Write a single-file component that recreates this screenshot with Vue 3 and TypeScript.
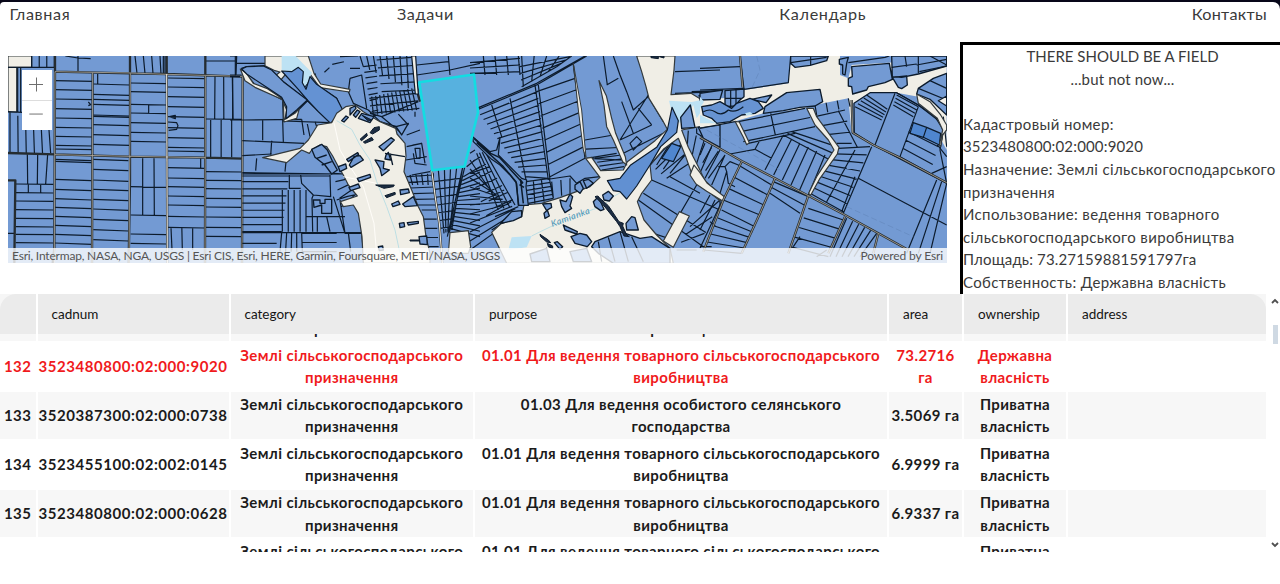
<script setup lang="ts">
type Hatch = [number, number, number, number, number, number, number, number, number]

interface Row {
  id: string
  cadnum: string
  category: string[]
  purpose: string[]
  area: string[]
  ownership: string[]
  selected?: boolean
}

const nav = [
  { label: 'Главная', cls: 'home' },
  { label: 'Задачи', cls: 'tasks' },
  { label: 'Календарь', cls: 'cal' },
  { label: 'Контакты', cls: 'contacts' },
]

const category = ['Землі сільськогосподарського', 'призначення']
const goods = ['01.01 Для ведення товарного сільськогосподарського', 'виробництва']
const priv = ['Приватна', 'власність']

const headers = ['', 'cadnum', 'category', 'purpose', 'area', 'ownership', 'address']
const rows: Row[] = [
  { id: '', cadnum: '', category, purpose: goods, area: [], ownership: [] },
  { id: '132', cadnum: '3523480800:02:000:9020', category, purpose: goods, area: ['73.2716', 'га'], ownership: ['Державна', 'власність'], selected: true },
  { id: '133', cadnum: '3520387300:02:000:0738', category, purpose: ['01.03 Для ведення особистого селянського', 'господарства'], area: ['3.5069 га'], ownership: priv },
  { id: '134', cadnum: '3523455100:02:002:0145', category, purpose: goods, area: ['6.9999 га'], ownership: priv },
  { id: '135', cadnum: '3523480800:02:000:0628', category, purpose: goods, area: ['6.9337 га'], ownership: priv },
  { id: '', cadnum: '', category, purpose: goods, area: [], ownership: priv },
]

const details = [
  'Кадастровый номер:',
  '3523480800:02:000:9020',
  'Назначение: Землі сільськогосподарського',
  'призначення',
  'Использование: ведення товарного',
  'сільськогосподарського виробництва',
  'Площадь: 73.27159881591797га',
  'Собственность: Державна власність',
]

// n boundary lines between edge p1-p2 and edge p3-p4
function hatch(list: Hatch[]): string {
  return list
    .map(([x1, y1, x2, y2, x3, y3, x4, y4, n]) => {
      let d = ''
      for (let i = 0; i < n; i++) {
        const t = n === 1 ? 0.5 : i / (n - 1)
        d += `M${(x1 + (x2 - x1) * t).toFixed(1)} ${(y1 + (y2 - y1) * t).toFixed(1)}L${(x3 + (x4 - x3) * t).toFixed(1)} ${(y3 + (y4 - y3) * t).toFixed(1)}`
      }
      return d
    })
    .join('')
}

// horizontal boundaries of a column
function rungs(x1: number, x2: number, slope: number, ys: number[]): string {
  return ys.map((y) => `M${x1} ${y}L${x2} ${y + slope}`).join('')
}

const westLines =
  rungs(165, 278, 2, [242, 269, 297, 326, 354, 382, 409, 436, 447]) +
  rungs(165, 275, 4, [478, 484, 538, 568, 596, 622, 649, 676, 703, 729]) +
  rungs(280, 388, 3, [252, 283, 298, 313, 345, 349, 374, 404, 433]) +
  rungs(280, 385, 4, [478, 508, 540, 568, 598, 627, 658, 689, 719]) +
  rungs(392, 498, 2, [249, 275, 313, 339, 368, 397, 424, 560, 645, 702, 730]) +
  rungs(504, 614, 2, [234, 261, 290, 320, 350, 383, 413, 442, 453, 503, 534, 560, 588, 615, 649, 682]) +
  rungs(618, 726, 1, [357, 515, 541, 566, 595, 621, 651, 682, 709]) +
  rungs(47, 160, 1, [552, 578, 603, 629, 655, 680, 703, 728]) +
  hatch([
    [95, 168, 163, 168, 95, 202, 163, 202, 4],
    [405, 168, 480, 168, 411, 220, 483, 222, 4],
    [30, 337, 147, 390, 30, 458, 152, 460, 6],
    [645, 228, 697, 230, 644, 357, 699, 357, 3],
    [632, 360, 695, 360, 632, 472, 695, 472, 3],
    [428, 475, 462, 475, 428, 645, 463, 645, 2],
    [513, 683, 578, 683, 516, 750, 578, 750, 3],
    [82, 463, 113, 463, 83, 552, 112, 552, 2],
  ]) +
  'M24 202H165M53 202V337M62 202V337M24 335L66 337M234 168V214M196 168L234 174L272 176M293 222V252M446 313V340M490 168V222M495 168V222M616 183H706M706 168V228M143 463L137 552M85 552V578M122 555V578M602 475V503M24 700H42M504 366L530 368L534 377L530 388L506 391M265 306L272 314L265 317M508 350L526 346V356Z'

const villageWestLines = hatch([
  [37, 210, 37, 272, 215, 208, 222, 280, 2],
  [98, 210, 158, 210, 98, 271, 160, 275, 2],
  [37, 317, 37, 368, 125, 312, 330, 372, 2],
  [37, 395, 37, 545, 175, 395, 155, 545, 8],
  [157, 420, 228, 420, 157, 545, 228, 545, 5],
  [37, 548, 37, 580, 395, 548, 140, 580, 2],
  [155, 548, 215, 548, 150, 605, 217, 605, 5],
  [37, 372, 37, 378, 300, 372, 300, 378, 2],
  [215, 550, 215, 605, 320, 550, 320, 605, 3],
  [310, 370, 335, 470, 345, 372, 380, 430, 5],
]) + 'M125 272L122 318M80 325L77 362M168 335L165 365M178 375V415H212M212 375L215 400L250 435L302 440L300 375M228 545V500H345M248 545L246 445L250 435M262 500V545M310 440L345 550L395 550L400 605M320 450L350 440L385 432M355 548L362 605M215 208L222 255M232 222L240 260M255 215L260 230M0 18L20 18L18 75L0 75M20 75L35 75M18 40H105M0 80H30M8 80V210M0 210H37M35 55L50 50L105 47L160 95L230 150L300 218L160 213L158 150L75 105Z M165 210L205 180L235 150M205 60L225 110L245 85L260 105L320 145L335 180L300 215M330 450L345 550M290 500L300 545'

const northLines = hatch([
  [400, 50, 425, 185, 440, 45, 445, 180, 9],
  [440, 30, 455, 125, 545, 22, 565, 120, 5],
  [390, 18, 530, 18, 400, 50, 535, 115, 8],
  [425, 140, 545, 115, 430, 195, 560, 180, 11],
  [418, 145, 422, 190, 560, 130, 568, 175, 3],
  [255, 70, 385, 18, 260, 90, 330, 20, 4],
  [455, 200, 555, 185, 515, 250, 555, 200, 3],
  [530, 380, 560, 465, 610, 375, 616, 465, 6],
  [540, 375, 610, 370, 548, 405, 610, 405, 5],
  [575, 480, 590, 590, 618, 480, 626, 590, 5],
  [625, 360, 698, 352, 642, 550, 665, 540, 5],
  [612, 395, 630, 535, 690, 385, 665, 530, 7],
  [700, 380, 660, 535, 750, 350, 750, 560, 14],
  [710, 350, 690, 545, 735, 330, 715, 590, 2],
]) + 'M698 352L652 560M704 352L658 548M655 18L660 75M560 75L660 60L750 40M560 45L655 35M420 190L455 200L565 155M415 180L450 215L500 230M360 85L395 75L410 175M360 85L355 125L370 160L415 180M270 105L355 125M360 55L390 55M530 255L570 240M530 290L575 280M527 330L590 320M545 375L600 365M548 285L575 280L585 340M550 310L555 340L590 345M555 295H570V325H560Z'

const centreLines = hatch([
  [0, 38, 0, 70, 150, 25, 150, 65, 3],
  [40, 18, 145, 18, 45, 75, 150, 75, 4],
  [150, 50, 155, 110, 300, 20, 260, 50, 4],
  [155, 18, 305, 18, 160, 110, 260, 50, 5],
  [20, 180, 165, 380, 200, 105, 235, 385, 15],
  [65, 165, 65, 165, 95, 260, 95, 260, 1],
  [120, 145, 120, 145, 170, 400, 170, 400, 1],
  [200, 125, 240, 380, 315, 85, 345, 325, 8],
  [168, 395, 175, 460, 240, 385, 250, 445, 6],
  [190, 390, 238, 385, 195, 465, 250, 445, 3],
  [0, 310, 75, 500, 15, 300, 145, 470, 9],
  [20, 310, 45, 305, 85, 480, 135, 465, 4],
  [0, 330, 0, 600, 60, 420, 155, 490, 11],
  [0, 370, 65, 540, 60, 350, 145, 490, 5],
  [345, 270, 350, 325, 430, 255, 460, 330, 3],
  [375, 325, 395, 360, 455, 315, 462, 350, 4],
  [245, 395, 300, 385, 250, 445, 300, 430, 3],
  [410, 105, 450, 270, 445, 85, 535, 135, 2],
  [450, 270, 460, 310, 545, 225, 580, 250, 2],
  [455, 155, 505, 175, 490, 250, 545, 225, 2],
  [560, 345, 600, 370, 600, 280, 645, 315, 3],
  [540, 345, 590, 385, 625, 250, 665, 335, 4],
  [655, 242, 750, 300, 650, 310, 705, 385, 5],
  [545, 390, 505, 450, 750, 480, 700, 590, 2],
  [600, 380, 550, 550, 690, 430, 610, 570, 2],
  [525, 420, 515, 440, 715, 535, 700, 560, 1],
  [750, 440, 690, 590, 750, 470, 725, 590, 3],
  [620, 600, 660, 530, 680, 600, 750, 450, 4],
  [615, 65, 615, 130, 750, 60, 750, 125, 2],
  [665, 125, 705, 150, 750, 122, 750, 148, 3],
]) + 'M0 190L20 180L200 105L350 18M20 175L200 100L345 18M195 105L235 390M205 105L240 388M310 45L345 325M400 18L412 105M430 18L450 75L470 125L490 180L535 140M350 325L440 310M580 215L535 140M240 387L300 378L320 400L345 385L390 380M480 280L500 260L515 275L490 300ZM545 390L750 480M680 405L590 560M680 235V250L750 290'

const eastLines = hatch([
  [0, 55, 0, 120, 120, 50, 130, 115, 2],
  [115, 215, 130, 275, 315, 175, 345, 230, 3],
  [212, 190, 212, 190, 226, 255, 226, 255, 1],
  [345, 165, 445, 145, 350, 195, 450, 170, 4],
  [345, 200, 410, 280, 435, 180, 455, 280, 4],
  [405, 185, 425, 180, 465, 300, 480, 285, 1],
  [250, 255, 375, 315, 195, 360, 325, 435, 6],
  [250, 255, 275, 245, 390, 330, 410, 290, 3],
  [415, 295, 330, 430, 510, 290, 430, 485, 9],
  [465, 300, 465, 300, 380, 455, 380, 455, 1],
  [500, 135, 465, 170, 562, 178, 545, 210, 5],
  [590, 135, 580, 165, 655, 170, 640, 200, 4],
  [585, 130, 655, 170, 525, 285, 600, 320, 2],
  [625, 245, 600, 320, 715, 290, 690, 370, 4],
  [730, 200, 695, 370, 740, 290, 740, 350, 3],
  [475, 385, 475, 385, 740, 525, 740, 525, 1],
  [515, 290, 515, 290, 430, 490, 430, 490, 1],
  [710, 390, 740, 400, 620, 610, 690, 610, 3],
  [115, 345, 70, 450, 215, 405, 180, 495, 4],
  [65, 480, 10, 600, 165, 530, 125, 610, 6],
  [220, 395, 210, 430, 325, 440, 300, 490, 3],
  [325, 475, 270, 590, 430, 510, 385, 620, 5],
  [440, 505, 530, 550, 390, 620, 480, 620, 6],
  [280, 590, 350, 620, 300, 560, 380, 600, 2],
  [15, 280, 75, 315, 0, 315, 25, 385, 4],
]) + 'M0 235L105 215M0 265L90 312L165 298L180 270M165 298L215 325M145 280L285 250M75 315L35 405M55 350L75 350L90 335L115 345M75 350L80 365L60 430M80 365L85 400L105 410M380 345L440 355M425 485L465 380M65 455L0 595M45 450L0 540M30 435L0 490'

const eastRoads = [
  'M0 262L125 333L225 385L325 437L435 495L535 550L625 600',
  'M120 18L128 112',
  'M125 335L70 450L10 605',
  'M225 385L180 490L125 610',
  'M325 437L300 510L265 610',
  'M435 500L385 610',
  'M535 550L520 610',
  'M455 150L458 248L520 285L600 323L740 398',
]
</script>

<template>
  <div class="page">
    <div class="frame">
      <nav class="nav">
        <a v-for="n in nav" :key="n.label" :class="n.cls">{{ n.label }}</a>
      </nav>
    </div>

    <main class="upper">
      <section class="map">
        <svg class="canvas" viewBox="8 56 939 207" width="939" height="207">
          <rect x="8" y="56" width="939" height="207" fill="#739ad3" />

          <g transform="scale(.33333)" class="ln">
            <path class="land" d="M24 168H95V202H24ZM24 202H50V336H24Z" />
            <path :d="westLines" />
            <path class="casing" d="M165 168V215L390 220L500 222L728 230M24 459L165 463L390 470L616 473L728 476M165 215L163 744L158 790M278 218L276 790M390 168V540L386 790M500 168L502 790M616 168L615 790M728 230L726 790M24 541H46L43 790" />
            <path class="road" d="M165 215L390 219L500 223L728 229M165 464L390 469L616 473M165 215L163 790M278 218L276 790M391 220L387 790M616 228L615 790M728 230L726 790" />
            <path class="road bright" d="M500 222L502 790" />
          </g>

          <g transform="translate(230 50) scale(.33333)" class="ln">
            <path :d="villageWestLines" />
            <path :d="northLines" />
            <path class="land" d="M105 18H235L252 70L272 102L360 118L358 126L270 113L240 72L232 98L215 110L205 60L165 75L140 105L135 78L150 66L135 62L105 47Z" />
            <path class="water" d="M155 18H197L220 42L246 68L232 100L222 112L205 60L180 70L155 60Z" />
            <path d="M155 63L185 65L205 52L220 65L217 98L228 118L240 80L260 103L320 145L337 178L302 220L265 185L232 150L205 118Z" fill="#6492d3" />
            <path class="land" d="M31 57L48 68L70 100L110 115L155 145L170 180L165 208L195 190L208 176L200 205L162 216L160 150L75 112L45 92Z" />
            <path d="M50 72L110 112L155 142L170 170L168 206L200 180L232 150L160 95L125 60L100 48L50 50L35 57Z" fill="#739ad3" />
            <path class="land" d="M347 170L375 165L400 185L450 215L497 235L501 252L525 280L528 318L522 365L545 420L565 470L580 500L588 560L600 610V640H400L396 560L385 490L370 465L340 470L331 455L382 438L355 405L340 375L325 350L308 318L290 290L270 285L245 300L238 310L215 300L170 338L98 323L210 295L235 270L263 225L305 218L320 190Z" />
            <path d="M312 218L330 300L360 350L400 410L432 520L440 610M340 380L440 400" stroke="#fffdf9" stroke-width="3" />
            <path class="stream" d="M320 212L365 238L390 285L420 330L440 395L470 470L495 540L510 610" />
            <path class="lot" d="M335 212L348 198L355 202L342 216ZM360 175L375 168L378 175L360 195ZM370 195L382 180L390 185L377 202ZM385 205L395 190L432 200L420 218ZM447 290L483 263L493 270L460 302ZM468 315L475 307L482 330L465 327ZM435 330L462 335L460 355L478 360L455 377L450 355ZM350 328L383 308L386 313L355 335ZM358 345L372 320L390 317L400 330L363 352ZM325 350L347 342L350 355L330 365ZM382 385L420 373L422 382L387 395ZM357 412L385 402L390 413L362 422ZM485 462L505 453L510 463L489 470ZM510 420L535 417L538 428L512 434ZM518 462L550 440L562 467L525 470ZM508 520L522 518L524 530L510 533ZM532 518L565 514V520L535 525ZM567 560L590 558L592 584L570 582ZM445 590L458 588L460 600L448 602ZM498 230L535 220L515 255Z" />
            <path class="lot" d="M245 298L275 283L292 300L308 335L322 360L305 372L285 345L255 322ZM260 325L290 315M275 345L305 335M465 310L525 320M480 310L488 345M250 450H270V460H285V448H305V490H275V465L252 472Z" />
            <path class="dark" d="M390 268L410 250L412 257L395 272ZM420 248L432 233L448 230V240L428 252ZM400 276L425 262L430 270L405 280ZM437 405L493 405L490 410L462 415ZM465 437L495 427L496 433L470 443ZM540 570H568V573H540ZM395 195L425 210L415 213Z" />
            <path class="land" d="M660 548L715 542L722 590L715 610H655Z" />
            <path class="casing" d="M552 18L563 130L570 155M605 360L617 450L628 520L637 640" />
            <path d="M545 18H557L562 95L565 132H556Z" fill="#f1eee6" />
            <path class="road bright" d="M605 360L617 450L628 520L637 640" />
          </g>

          <g transform="translate(470 50) scale(.33333)" class="ln">
            <path :d="centreLines" />
            <path class="land" d="M65 547L92 522L155 500L162 465L215 460L270 443L305 430L360 410L390 382L347 325L365 322L392 362L460 360L472 335L555 272L592 238L580 215L537 145L528 110L515 65L500 18H615L612 60L603 134L663 130L700 152L750 158V212L690 230L635 240L655 292L685 350L705 392L750 433V452L702 414L672 390L648 322L625 265L580 298L540 345L545 390L515 430L502 455L522 510L560 555L600 595L610 640H110Z" />
            <path class="land" d="M387 92L409 137L425 205L437 250L466 320L470 345L458 335L430 270L410 230L402 165Z" />
            <path class="land thin" d="M310 40L335 180L348 322L340 300L325 180Z" />
            <path class="water" d="M597 152L665 156L693 150L700 175L680 205L670 165L630 220L605 185Z" />
            <path class="water" d="M125 562L185 558L170 592L115 600Z" />
            <path class="stream" d="M185 558C260 520 330 490 395 470L430 440L500 400" />
            <path d="M606 172L625 212L620 247L572 290L540 345L500 408L470 447L450 425L430 422L412 392L450 385L482 345L560 292L592 240Z" fill="#6190d2" />
            <path class="lot" d="M632 202L661 165L675 232L635 235ZM695 172L725 165L750 175V218L705 195ZM685 232L750 225V292L700 265ZM398 435L415 424L430 438L418 453L402 450ZM370 455L385 440L402 478L392 482L375 470ZM218 462L243 460L245 472L232 480L238 498L225 505L222 490L230 482ZM270 450L288 455L300 432L308 440L300 468L305 475L285 488L275 470ZM280 525L290 530L322 545L320 552L285 540ZM303 560L330 550L350 555L365 575L352 590L315 580ZM365 590L375 575L450 545L510 565L545 560L600 595V640H430L385 610ZM468 520L485 500L495 503L505 540L470 540ZM92 520L125 485L155 482L155 500L130 512ZM253 578L262 575L278 590L270 598ZM180 612L230 595L240 635H185ZM300 605L350 595L365 635H310ZM315 405L330 395L340 415L330 430L315 418ZM340 392L355 388L370 400L350 415Z" />
            <path class="parcel" d="M575 325L605 280L632 290L610 335Z" />
            <path d="M385 575L395 635M415 562L435 635M450 545L475 635M485 560L520 635" />
            <path class="dark" d="M375 440L382 438L415 467L447 515L460 520L458 528L470 555L478 560L462 558L450 530L440 515L400 465ZM210 553L235 570L242 578L230 576L212 560ZM232 580L248 588V596L235 590ZM543 18H565V26L543 23ZM568 20L582 18V24Z" />
            <path d="M8 260L60 305L80 300L90 262L85 315L155 385L170 390L168 410L175 466H145L140 400L120 375L90 345L65 328L10 275Z" fill="#6b93cb" />
            <path d="M12 265L62 310L88 322L152 392L160 460M20 278L65 318L100 350L138 395L146 465M150 388L158 398L150 405L162 412" stroke-width="4.5" />
            <path class="land" d="M580 573L628 485L658 498L610 592Z" />
            <text class="river" x="247" y="531" transform="rotate(-20 247 531)">Kamianka</text>
          </g>

          <g transform="translate(700 50) scale(.33333)" class="ln">
            <path class="land clean" d="M0 145L70 145L132 120L265 100L270 45L330 48L385 18H420V75L445 85L455 45L565 38L740 18V300L655 140L590 128L490 140L460 160L455 250L445 145L370 160L345 165L300 178L190 190L105 214L60 225L0 232Z" />
            <path d="M510 128L590 128L655 165L705 200L730 240L720 300L740 400L520 285L463 248L462 160Z" fill="#739ad3" />
            <path :d="eastLines" />
            <path d="M120 18L132 118L265 98L272 18M590 128L655 165L720 215L730 245L720 290" />
            <path class="lot" d="M190 190L195 170L260 128L360 118L368 155L345 168L300 172L250 182ZM75 122L132 117V140L120 150L105 168L75 170ZM155 148L215 135L198 158L185 155ZM418 28L445 22L440 40L435 75L428 72V45L418 42ZM455 50L568 40L577 88L555 98L505 110L500 120L458 132L455 110L445 108V85L457 80ZM575 18H740V48L655 72L605 82L577 80ZM577 82L620 78L622 105L605 116L595 112ZM740 70L700 85L655 115L650 132L690 148L740 195ZM272 18H385L380 32L330 46L285 52L272 40ZM0 130L68 120L60 148L0 150Z" />
            <path d="M92 120V168M108 120V165M75 145H125M332 20V45M272 38L380 22M655 115L740 150M690 92L740 115M575 52L650 42M655 18V70M615 18L620 50M650 45L740 28M690 18L740 45M658 65L740 48M445 38L555 22L568 18" />
            <path d="M715 152L740 138V168Z" fill="#f3f0e9" />
            <path class="deep" d="M5 170L35 165L60 155L95 175L110 160L150 145L175 155L190 175L165 190L125 195L90 215L50 220L35 205L10 195Z" />
            <path class="parcel" d="M640 218L680 232L670 262L630 250ZM680 232L722 250L718 285L670 262Z" />
            <path d="M10 185Q30 175 45 185Q65 200 85 180Q105 190 130 170" />
            <path class="water" d="M0 140L12 155L0 175ZM0 195L50 220H0ZM135 190L150 186L160 193L140 197Z" />
            <path class="land" d="M320 175L340 175L350 200L395 262L417 292L412 312L360 385L332 436L326 430L350 380L402 300L385 270L345 225Z" />
            <path class="land" d="M105 214L118 216L148 278L140 284L130 262ZM650 132L690 155L722 195L740 225V240L728 255L722 290L718 285L728 240L712 205L655 160Z" />
            <path class="land" d="M-18 345L0 368L22 400L75 442L68 453L20 424L-12 402L-30 375Z" />
            <path v-for="r in eastRoads" :key="r" class="casing" :d="r" />
            <path v-for="r in eastRoads" :key="'c' + r" class="road" :d="r" />
            <path d="M20 240L150 310M160 315L240 360M440 470L640 560M170 18L180 60L155 115" stroke="#6488bc" stroke-width="2" stroke-dasharray="18 9" />
          </g>

          <path class="chosen" d="M419.3 82.2L474 74.5L478 112.5L464.5 166.5L432.3 170.3Z" />
        </svg>
        <div class="zoomer">
          <svg viewBox="0 0 30 30" width="30" height="30"><path d="M7 14.500H21M14.500 7.500V21.500" /></svg>
          <svg class="minus" viewBox="0 0 30 30" width="30" height="29"><path d="M7 13.500H21" /></svg>
        </div>
        <div class="attribution">
          <span class="sources">Esri, Intermap, NASA, NGA, USGS | Esri CIS, Esri, HERE, Garmin, Foursquare, METI/NASA, USGS</span>
          <span class="powered">Powered by Esri</span>
        </div>
      </section>

      <aside class="info">
        <p class="caps">THERE SHOULD BE A FIELD</p>
        <p class="soon">...but not now...</p>
        <div class="details">
          <p v-for="(d, i) in details" :key="d" :class="{ digits: i === 1 || i === 6 }">{{ d }}</p>
        </div>
      </aside>
    </main>

    <section class="table">
      <div class="grid">
        <div class="row head">
          <div v-for="h in headers" :key="h" class="cell">{{ h }}</div>
        </div>
        <div class="body">
          <div v-for="(r, i) in rows" :key="i" class="row" :class="{ odd: i % 2 === 0, selected: r.selected }">
            <div class="cell num">{{ r.id }}</div>
            <div class="cell num">{{ r.cadnum }}</div>
            <div class="cell"><span v-for="t in r.category" :key="t">{{ t }}</span></div>
            <div class="cell"><span v-for="t in r.purpose" :key="t">{{ t }}</span></div>
            <div class="cell"><span v-for="t in r.area" :key="t">{{ t }}</span></div>
            <div class="cell"><span v-for="t in r.ownership" :key="t">{{ t }}</span></div>
            <div class="cell"></div>
          </div>
        </div>
      </div>
      <div class="scroll">
        <svg viewBox="0 0 8 6" width="8" height="6"><path d="M1 5L4 2L7 5" /></svg>
        <div class="thumb"></div>
        <svg class="down" viewBox="0 0 8 6" width="8" height="6"><path d="M1 1L4 4L7 1" /></svg>
      </div>
    </section>
  </div>
</template>

<style>
body { margin: 0; overflow: hidden; background: #fff; }
</style>

<style scoped>
.page { width: 1280px; height: 584px; overflow: hidden; background: #fff; color: #3a3a3a; font: 15px/22.600px Lato, "Open Sans", "Noto Sans", sans-serif; }
p { margin: 0; white-space: nowrap; }
.frame { padding-top: 2px; background: #080719; }
.nav { display: flex; justify-content: space-between; height: 40px; padding: 1px 13px 0 9.500px; box-sizing: border-box; font-size: 16.200px; letter-spacing: .68px; white-space: nowrap; background: #fff; border-radius: 4px 7px 0 0; }
.tasks { padding-left: 1px; }
.contacts { letter-spacing: .3px; }
.upper { display: flex; height: 252px; }
.map { position: relative; width: 939px; height: 207px; margin: 14px 13px 0 8px; overflow: hidden; }
.canvas { display: block; }
.ln { fill: none; stroke: #0c1b2c; stroke-width: 3.600px; stroke-linejoin: round; }
.ln .land { fill: #f0eee6; stroke: #333a3d; }
.ln .clean { stroke: none; }
.ln .thin { stroke-width: 3px; }
.ln .water { fill: #bde2f4; stroke: none; }
.ln .stream { stroke: #bddfe4; stroke-width: 3px; }
.ln .lot { fill: #739ad3; stroke-width: 4px; }
.ln .deep { fill: #6793d2; stroke-width: 4px; }
.ln .parcel { fill: #4f86cf; }
.ln .dark { fill: #1d2d43; stroke-width: 3px; }
.ln .casing { stroke: #252c30; stroke-width: 7px; }
.ln .road { stroke: #b5ada0; stroke-width: 2.400px; }
.ln .bright { stroke: #efe8da; stroke-width: 3.400px; }
.river { font: italic 27px Lato, sans-serif; fill: #4a93b5; stroke: none; letter-spacing: 1.500px; }
.chosen { fill: #57b1df; stroke: #13dce2; stroke-width: 2.600px; stroke-linejoin: round; }
.zoomer { position: absolute; left: 14px; top: 14px; width: 30px; height: 60px; background: #fff; }
.zoomer svg { display: block; fill: none; stroke: #6e6e6e; stroke-width: 1px; }
.zoomer .minus { border-top: 1px solid #ddd; }
.attribution { position: absolute; left: 0; right: 0; bottom: 0; height: 15px; padding: 0 4px; display: flex; justify-content: space-between; background: rgba(255, 255, 255, .8); font-size: 12px; line-height: 15px; color: #555; white-space: nowrap; letter-spacing: -.2px; }
.powered { letter-spacing: -.12px; }
.info { flex: 1; border: solid #000; border-width: 3px 0 0 3px; height: 249px; }
.caps, .soon { text-align: center; padding-left: 2px; }
.soon { letter-spacing: .15px; }
.details { padding-top: 22.600px; letter-spacing: .37px; }
.details .digits { letter-spacing: .16px; }
.table { display: flex; height: 258px; }
.grid { width: 1266px; height: 258px; overflow: hidden; }
.row { display: grid; grid-template-columns: 35.500px 191px 242.500px 412px 73px 102px 198px; column-gap: 2px; height: 49.100px; }
.head { height: 40px; color: #151515; font-size: 13.500px; background: linear-gradient(90deg, #f6f6f6 16px, transparent 16px 1250px, #f6f6f6 1250px); }
.head .cell { background: #ebebeb; align-items: flex-start; padding-left: 14px; }
.head .cell:first-child { border-top-left-radius: 16px; }
.head .cell:last-child { border-top-right-radius: 16px; }
.cell { display: flex; flex-direction: column; align-items: center; justify-content: center; box-sizing: border-box; white-space: nowrap; }
.body { height: 218px; overflow: hidden; font-weight: 700; color: #1b1b1b; letter-spacing: .38px; }
.body .row:first-child { margin-top: -40.600px; }
.body .row { box-sizing: border-box; padding-bottom: 1.600px; }
.num { letter-spacing: .55px; }
.odd .cell { background: #f7f7f7; }
.body .selected { color: #f01a1c; }
.scroll { width: 14px; display: flex; flex-direction: column; align-items: center; padding: 4px 0 4px 4px; box-sizing: border-box; }
.scroll svg { fill: none; stroke: #505050; stroke-width: 1.800px; }
.thumb { width: 5px; height: 19px; margin-top: 21px; background: #cfd9e3; }
.down { margin-top: auto; }
</style>
